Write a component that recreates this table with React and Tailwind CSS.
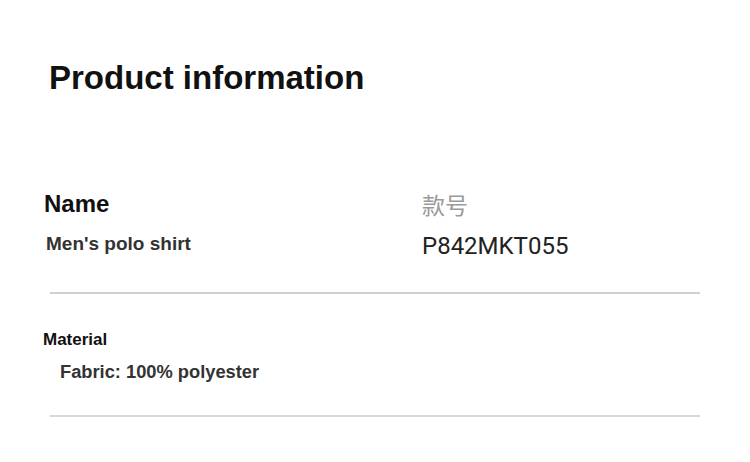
export default function App() {
  const sans = { fontFamily: '"Liberation Sans", Arial, sans-serif' };
  return (
    <div className="w-[750px] h-[462px] bg-white overflow-hidden pt-[58px]" style={sans}>
      <h1 className="ml-[49px] text-[33px] leading-[40px] font-bold text-[#111]">Product information</h1>
      <div className="mt-[92px] flex">
        <div className="w-[378px] ml-[44px] flex flex-col">
          <div className="text-[24px] leading-[28px] font-bold text-[#111]">Name</div>
          <div className="mt-[14px] ml-[2px] text-[19px] leading-[24px] font-bold text-[#333]">Men's polo shirt</div>
        </div>
        <div className="flex flex-col">
          <div
            className="text-[23px] leading-[28px] text-[#9a9a9a]"
            style={{ fontFamily: '"Noto Sans CJK SC", "Noto Sans", sans-serif' }}
          >
            款号
          </div>
          <div
            className="mt-[14px] text-[24px] leading-[28px] text-[#222]"
            style={{ fontFamily: 'Roboto, "Liberation Sans", sans-serif' }}
          >
            P842MKT055
          </div>
        </div>
      </div>
      <div className="mt-[32px] ml-[50px] w-[650px] h-[2px] bg-[#d0d0d0]" />
      <div className="mt-[36px] ml-[43px] text-[17px] leading-[20px] font-bold text-[#111]">Material</div>
      <div className="mt-[10px] ml-[60px] text-[18.3px] leading-[24px] font-bold text-[#333]">Fabric: 100% polyester</div>
      <div className="mt-[31px] ml-[50px] w-[650px] h-[2px] bg-[#d8d8d8]" />
    </div>
  );
}
